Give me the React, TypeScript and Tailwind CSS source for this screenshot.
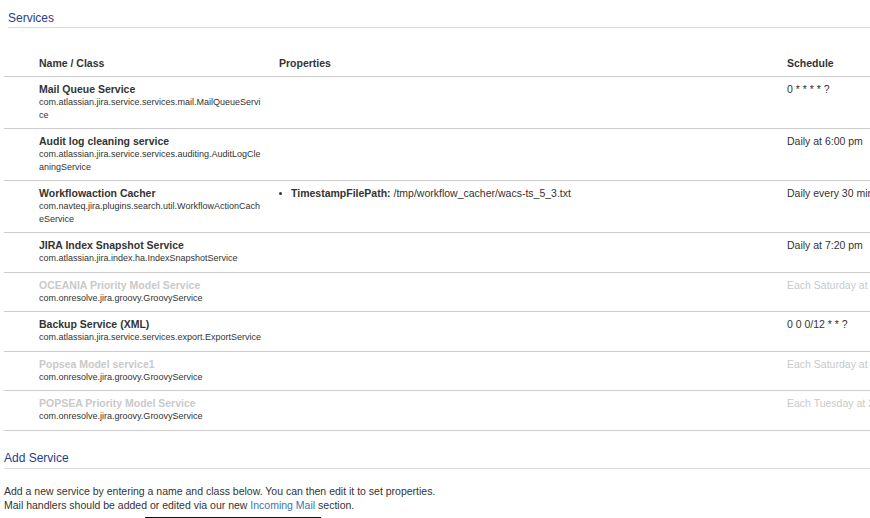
import React from "react";

type Row = {
  name: string;
  cls: string[];
  schedule: string;
  disabled?: boolean;
  prop?: { k: string; v: string };
};

const rows: Row[] = [
  {
    name: "Mail Queue Service",
    cls: ["com.atlassian.jira.service.services.mail.MailQueueServi", "ce"],
    schedule: "0 * * * * ?",
  },
  {
    name: "Audit log cleaning service",
    cls: ["com.atlassian.jira.service.services.auditing.AuditLogCle", "aningService"],
    schedule: "Daily at 6:00 pm",
  },
  {
    name: "Workflowaction Cacher",
    cls: ["com.navteq.jira.plugins.search.util.WorkflowActionCach", "eService"],
    schedule: "Daily every 30 minutes",
    prop: { k: "TimestampFilePath:", v: "/tmp/workflow_cacher/wacs-ts_5_3.txt" },
  },
  {
    name: "JIRA Index Snapshot Service",
    cls: ["com.atlassian.jira.index.ha.IndexSnapshotService"],
    schedule: "Daily at 7:20 pm",
  },
  {
    name: "OCEANIA Priority Model Service",
    cls: ["com.onresolve.jira.groovy.GroovyService"],
    schedule: "Each Saturday at 11:00 pm",
    disabled: true,
  },
  {
    name: "Backup Service (XML)",
    cls: ["com.atlassian.jira.service.services.export.ExportService"],
    schedule: "0 0 0/12 * * ?",
  },
  {
    name: "Popsea Model service1",
    cls: ["com.onresolve.jira.groovy.GroovyService"],
    schedule: "Each Saturday at 10:00 pm",
    disabled: true,
  },
  {
    name: "POPSEA Priority Model Service",
    cls: ["com.onresolve.jira.groovy.GroovyService"],
    schedule: "Each Tuesday at 2:00 am",
    disabled: true,
  },
];

export default function App() {
  return (
    <div
      className="w-[870px] h-[518px] overflow-hidden bg-white text-[#333333]"
      style={{ fontFamily: '"Liberation Sans", Arial, sans-serif' }}
    >
      <div className="pl-[8px] pt-[11px]">
        <h2 className="text-[12px] leading-[15px] text-[#1f3d8f] pb-[1px] border-b border-[#dcdcdc]">
          Services
        </h2>
      </div>

      <div className="ml-[4px] mt-[22px] w-[1000px]">
        <div className="grid grid-cols-[28px_240px_508px_224px] border-b border-[#cccccc] text-[10.5px] leading-[14px] font-bold">
          <div />
          <div className="px-[7px] pt-[6px] pb-[6px]">Name / Class</div>
          <div className="px-[7px] pt-[6px] pb-[6px]">Properties</div>
          <div className="px-[7px] pt-[6px] pb-[6px]">Schedule</div>
        </div>
        {rows.map((r) => (
          <div
            key={r.name}
            className="grid grid-cols-[28px_240px_508px_224px] border-b border-[#cccccc]"
          >
            <div />
            <div className="px-[7px] pt-[5px] pb-[7px]">
              <div
                className={
                  "text-[10.5px] leading-[14px] font-bold whitespace-nowrap " +
                  (r.disabled ? "text-[#c9c9c9]" : "text-[#333333]")
                }
              >
                {r.name}
              </div>
              {r.cls.map((c) => (
                <div key={c} className="text-[9px] leading-[12.5px] whitespace-nowrap text-[#333333]">
                  {c}
                </div>
              ))}
            </div>
            <div className="px-[7px] pt-[5px] pb-[6px] text-[10.5px] leading-[14px]">
              {r.prop && (
                <div className="flex items-center whitespace-nowrap">
                  <span className="w-[12px] flex items-center">
                    <span className="w-[3px] h-[3px] rounded-full bg-[#333333]" />
                  </span>
                  <span className="font-bold">{r.prop.k}</span>
                  <span>&nbsp;{r.prop.v}</span>
                </div>
              )}
            </div>
            <div
              className={
                "px-[7px] pt-[5px] pb-[6px] text-[10.5px] leading-[14px] whitespace-nowrap " +
                (r.disabled ? "text-[#c9c9c9]" : "text-[#333333]")
              }
            >
              {r.schedule}
            </div>
          </div>
        ))}
      </div>

      <div className="ml-[4px] mt-[20px]">
        <h2 className="text-[12px] leading-[15px] text-[#1f3d8f] pb-[2px] border-b border-[#dcdcdc]">
          Add Service
        </h2>
        <p className="mt-[15px] text-[10.5px] leading-[14px]">
          Add a new service by entering a name and class below. You can then edit it to set properties.
          <br />
          Mail handlers should be added or edited via our new{" "}
          <a className="text-[#3b73af]" href="#">
            Incoming Mail
          </a>{" "}
          section.
        </p>
        <div className="flex mt-[5px]">
          <div className="w-[141px]" />
          <div className="w-[176px] h-[8px] border-t-2 border-[#111111]" />
        </div>
      </div>
    </div>
  );
}
